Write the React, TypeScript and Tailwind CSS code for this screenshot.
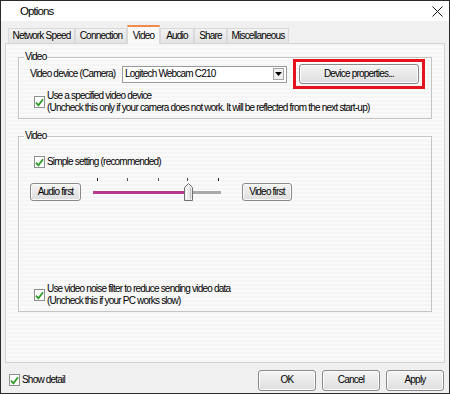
import React from "react";

const FONT = "font-['Liberation_Sans',Arial,sans-serif]";

function Check() {
  return (
    <span className="flex h-[12px] w-[11px] shrink-0 items-center justify-center border border-[#8e8f8f] bg-white">
      <svg width="9" height="9" viewBox="0 0 9 9">
        <path d="M1 4.6 L3.4 7.3 L8 1.2" fill="none" stroke="#2f9c2a" strokeWidth="1.8" />
      </svg>
    </span>
  );
}

function Btn({ children, className = "" }: { children: React.ReactNode; className?: string }) {
  return (
    <div
      className={`flex items-center justify-center whitespace-nowrap rounded-[3px] border border-[#8a8a8a] bg-gradient-to-b from-[#f4f4f4] to-[#dedede] shadow-[inset_0_0_0_1px_#fbfbfb] ${className}`}
    >
      {children}
    </div>
  );
}

function Tab({ label, w, selected = false }: { label: string; w: string; selected?: boolean }) {
  if (selected) {
    return (
      <div
        className={`relative z-10 -mb-px flex h-[19px] items-center justify-center whitespace-nowrap border-x border-t-2 border-x-[#d9d9d9] border-t-[#f08a4b] bg-[#f9f9f9] ${w}`}
      >
        {label}
      </div>
    );
  }
  return (
    <div
      className={`flex h-[15px] items-center justify-center whitespace-nowrap border border-b-0 border-[#d9d9d9] bg-gradient-to-b from-[#f2f2f2] to-[#e4e4e4] ${w}`}
    >
      {label}
    </div>
  );
}

function Slider() {
  const ticks = [7, 37, 68, 97, 128];
  return (
    <svg width="134" height="23" viewBox="0 0 134 23" className="shrink-0">
      {ticks.map((x, i) => (
        <rect key={i} x={x} y={0} width="1" height="3" fill={i === 0 || i === 4 ? "#222" : "#555"} />
      ))}
      <rect x="3" y="13" width="128" height="3" fill="#a9a9a9" />
      <rect x="3" y="13" width="92" height="3" fill="#b53a93" />
      <path d="M94.5 22.5 V9.5 L98.5 5.5 L102.5 9.5 V22.5 Z" fill="#ececec" stroke="#6f6f6f" />
      <path d="M96.5 10 V21" stroke="#ffffff" />
      <path d="M100.5 10 V21" stroke="#bdbdbd" />
    </svg>
  );
}

export default function App() {
  return (
    <div className={`flex h-[394px] w-[450px] flex-col border border-[#2a2a2a] bg-[#f0f0f0] text-[10px] leading-[12px] tracking-[-0.8px] text-black ${FONT}`}>
      {/* title bar */}
      <div className="flex h-[20px] shrink-0 items-center justify-between bg-white pl-[19px] pr-[6px]">
        <span className="text-[11.5px] tracking-[-0.9px]">Options</span>
        <svg width="11" height="11" viewBox="0 0 11 11">
          <path d="M0.5 0.5 L10.5 10.5 M10.5 0.5 L0.5 10.5" stroke="#111" strokeWidth="1" />
        </svg>
      </div>

      {/* body */}
      <div className="flex flex-1 flex-col px-[4px]">
        {/* tabs */}
        <div className="mt-[4px] flex h-[18px] items-end pl-[3px]">
          <Tab label="Network Speed" w="w-[67px]" />
          <Tab label="Connection" w="w-[52px]" />
          <Tab label="Video" w="w-[33px]" selected />
          <Tab label="Audio" w="w-[34px]" />
          <Tab label="Share" w="w-[33px]" />
          <Tab label="Miscellaneous" w="w-[62px]" />
        </div>

        {/* panel */}
        <div className="flex h-[320px] flex-col border border-[#d3d3d3] bg-[repeating-linear-gradient(180deg,#f5f5f5_0px,#f5f5f5_2px,#fafafa_2px,#fafafa_4px)] px-[12px]">
          {/* group 1 */}
          <div className="relative mt-[13px] h-[62px] border border-[#c4c4c4] shadow-[inset_1px_1px_0_#ffffff]">
            <span className="absolute -top-[7px] left-[5px] bg-[#f7f7f7] px-[1px]">Video</span>
            <div className="flex items-center pl-[11px] pt-[1px]">
              <span className="w-[92px] shrink-0 whitespace-nowrap">Video device (Camera)</span>
              <div className="flex h-[17px] w-[165px] items-center justify-between border border-[#9a9a9a] bg-white pl-[2px] pr-[2px]">
                <span className="whitespace-nowrap">Logitech Webcam C210</span>
                <span className="flex h-[12px] w-[11px] items-center justify-center border border-[#a5a5a5] bg-[#f0f0f0]">
                  <svg width="7" height="4" viewBox="0 0 7 4">
                    <path d="M0 0 H7 L3.5 4 Z" fill="#000" />
                  </svg>
                </span>
              </div>
              <div className="ml-[6px] border-[3px] border-[#e5131d] px-[3px] py-[2px]">
                <Btn className="h-[20px] w-[120px]">Device properties...</Btn>
              </div>
            </div>
            <div className="mt-[1px] flex items-center gap-[2px] pl-[15px]">
              <Check />
              <div className="flex flex-col whitespace-nowrap">
                <span>Use a specified video device</span>
                <span>(Uncheck this only if your camera does not work. It will be reflected from the next start-up)</span>
              </div>
            </div>
          </div>

          {/* group 2 */}
          <div className="relative mt-[17px] h-[176px] border border-[#c4c4c4] shadow-[inset_1px_1px_0_#ffffff]">
            <span className="absolute -top-[7px] left-[5px] bg-[#f7f7f7] px-[1px]">Video</span>
            <div className="mt-[19px] flex items-center gap-[2px] whitespace-nowrap pl-[15px]">
              <Check />
              <span>Simple setting (recommended)</span>
            </div>
            <div className="mt-[10px] flex h-[23px] items-end pl-[11px]">
              <Btn className="h-[18px] w-[51px]">Audio first</Btn>
              <div className="ml-[9px]">
                <Slider />
              </div>
              <Btn className="ml-[18px] h-[18px] w-[50px]">Video first</Btn>
            </div>
            <div className="mt-[82px] flex items-center gap-[2px] pl-[15px]">
              <Check />
              <div className="flex flex-col whitespace-nowrap">
                <span>Use video noise filter to reduce sending video data</span>
                <span>(Uncheck this if your PC works slow)</span>
              </div>
            </div>
          </div>
        </div>

        {/* bottom row */}
        <div className="flex flex-1 items-center justify-between pl-[4px] pr-[1px] pt-[4px]">
          <div className="flex items-center gap-[2px] whitespace-nowrap">
            <Check />
            <span>Show detail</span>
          </div>
          <div className="flex gap-[6px]">
            <Btn className="h-[21px] w-[58px]">OK</Btn>
            <Btn className="h-[21px] w-[58px]">Cancel</Btn>
            <Btn className="h-[21px] w-[58px]">Apply</Btn>
          </div>
        </div>
      </div>
    </div>
  );
}
